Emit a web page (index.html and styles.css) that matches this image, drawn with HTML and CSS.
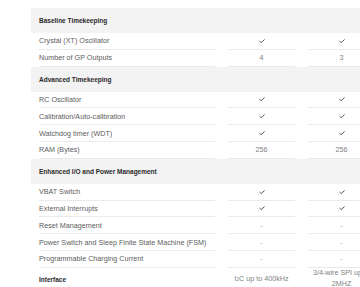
FILE: index.html
```html
<!DOCTYPE html>
<html>
<head>
<meta charset="utf-8">
<link rel="stylesheet" href="styles.css">
</head>
<body>
<div class="table">
  <div class="row head">
    <div class="cell label"></div>
    <div class="cell val">Oscillator</div>
    <div class="cell val">Oscillator</div>
  </div>

  <div class="section">Baseline Timekeeping</div>
  <div class="row"><div class="cell label">Crystal (XT) Oscillator</div><div class="cell val"><svg class="chk" viewBox="0 0 7 5"><polyline points="0.6,2.4 2.5,4.3 6.5,0.6"/></svg></div><div class="cell val"><svg class="chk" viewBox="0 0 7 5"><polyline points="0.6,2.4 2.5,4.3 6.5,0.6"/></svg></div></div>
  <div class="row"><div class="cell label">Number of GP Outputs</div><div class="cell val num">4</div><div class="cell val num">3</div></div>

  <div class="section">Advanced Timekeeping</div>
  <div class="row"><div class="cell label">RC Oscillator</div><div class="cell val"><svg class="chk" viewBox="0 0 7 5"><polyline points="0.6,2.4 2.5,4.3 6.5,0.6"/></svg></div><div class="cell val"><svg class="chk" viewBox="0 0 7 5"><polyline points="0.6,2.4 2.5,4.3 6.5,0.6"/></svg></div></div>
  <div class="row"><div class="cell label">Calibration/Auto-calibration</div><div class="cell val"><svg class="chk" viewBox="0 0 7 5"><polyline points="0.6,2.4 2.5,4.3 6.5,0.6"/></svg></div><div class="cell val"><svg class="chk" viewBox="0 0 7 5"><polyline points="0.6,2.4 2.5,4.3 6.5,0.6"/></svg></div></div>
  <div class="row"><div class="cell label">Watchdog timer (WDT)</div><div class="cell val"><svg class="chk" viewBox="0 0 7 5"><polyline points="0.6,2.4 2.5,4.3 6.5,0.6"/></svg></div><div class="cell val"><svg class="chk" viewBox="0 0 7 5"><polyline points="0.6,2.4 2.5,4.3 6.5,0.6"/></svg></div></div>
  <div class="row"><div class="cell label">RAM (Bytes)</div><div class="cell val num">256</div><div class="cell val num">256</div></div>

  <div class="section">Enhanced I/O and Power Management</div>
  <div class="row"><div class="cell label">VBAT Switch</div><div class="cell val"><svg class="chk" viewBox="0 0 7 5"><polyline points="0.6,2.4 2.5,4.3 6.5,0.6"/></svg></div><div class="cell val"><svg class="chk" viewBox="0 0 7 5"><polyline points="0.6,2.4 2.5,4.3 6.5,0.6"/></svg></div></div>
  <div class="row"><div class="cell label">External Interrupts</div><div class="cell val"><svg class="chk" viewBox="0 0 7 5"><polyline points="0.6,2.4 2.5,4.3 6.5,0.6"/></svg></div><div class="cell val"><svg class="chk" viewBox="0 0 7 5"><polyline points="0.6,2.4 2.5,4.3 6.5,0.6"/></svg></div></div>
  <div class="row"><div class="cell label">Reset Management</div><div class="cell val dash">-</div><div class="cell val dash">-</div></div>
  <div class="row"><div class="cell label">Power Switch and Sleep Finite State Machine (FSM)</div><div class="cell val dash">-</div><div class="cell val dash">-</div></div>
  <div class="row"><div class="cell label">Programmable Charging Current</div><div class="cell val dash">-</div><div class="cell val dash">-</div></div>

  <div class="row iface">
    <div class="cell label bold">Interface</div>
    <div class="cell val num">I<sup>2</sup>C up to 400kHz</div>
    <div class="cell val num">3/4-wire SPI up to 2MHZ</div>
  </div>
</div>
</body>
</html>
```
FILE: styles.css
```css
html, body {
  margin: 0;
  padding: 0;
  background: #ffffff;
  overflow: hidden;
}
body {
  font-family: "Liberation Sans", Arial, sans-serif;
  font-size: 7.2px;
  color: #5c5c5c;
  width: 360px;
  height: 287px;
}
.table {
  padding-left: 31px;
  width: 344px;
}
.row {
  display: grid;
  grid-template-columns: 176px 67px 67px;
  column-gap: 13px;
  padding-left: 8px;
}
.cell {
  height: 16.8px;
  box-sizing: border-box;
  border-bottom: 1px solid #eaeaea;
  display: flex;
  align-items: center;
  white-space: nowrap;
}
.val {
  justify-content: center;
  text-align: center;
}
.num {
  color: #7f7f7f;
}
.dash {
  color: #a0a0a0;
}
.head {
  margin-top: -12px;
  height: 20px;
}
.head .cell {
  height: 20px;
  border-bottom: none;
  align-items: flex-end;
  padding-bottom: 6px;
  line-height: 9px;
  color: #8a8a8a;
}
.section {
  height: 25px;
  background: #f3f3f3;
  padding-left: 8px;
  display: flex;
  align-items: center;
  font-weight: 700;
  font-size: 6.5px;
  color: #2a2a2a;
}
.chk {
  width: 6px;
  height: 4.3px;
  fill: none;
  stroke: #3a3a3a;
  stroke-width: 1;
}
.iface .cell {
  height: 22px;
  border-bottom: none;
  white-space: normal;
  line-height: 10.3px;
}
.iface .bold {
  font-weight: 700;
  font-size: 6.5px;
  color: #2a2a2a;
  padding-top: 2px;
}
sup {
  font-size: 5px;
  line-height: 0;
}
```
